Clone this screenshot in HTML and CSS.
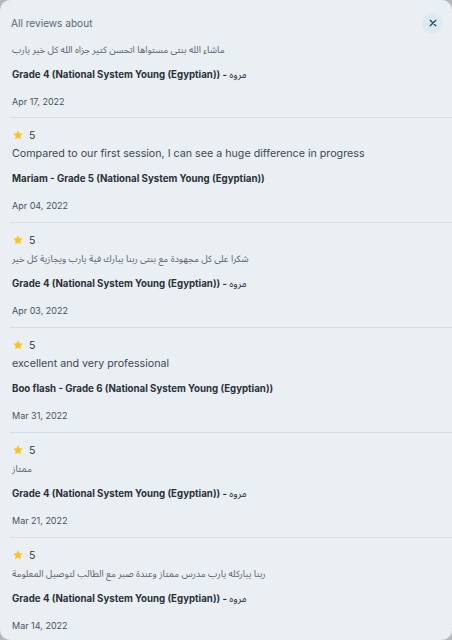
FILE: index.html
```html
<!DOCTYPE html>
<html lang="en">
<head>
<meta charset="utf-8">
<title>All reviews</title>
<link rel="stylesheet" href="styles.css">
</head>
<body>
<div class="modal">
  <div class="header">
    <span class="title">All reviews about</span>
    <button class="close" aria-label="Close">
      <svg width="8" height="8" viewBox="0 0 8 8"><path d="M1.2 1.2L6.8 6.8M6.8 1.2L1.2 6.8" stroke="#1d4a63" stroke-width="1.3" stroke-linecap="round"/></svg>
    </button>
  </div>
  <div class="list">
    <div class="item partial">
      <div class="text ar">ماشاء الله بنتى مستواها اتحسن كتير جزاه الله كل خير يارب</div>
      <div class="name">Grade 4 (National System Young (Egyptian)) - <span class="ar-name">مروه</span></div>
      <div class="date">Apr 17, 2022</div>
    </div>
    <div class="item">
      <div class="rating"><svg class="star" viewBox="0 0 24 24"><path d="M12 2.5l2.9 6.1 6.6.8-4.9 4.6 1.3 6.6L12 17.3l-5.9 3.3 1.3-6.6-4.9-4.6 6.6-.8z"/></svg><span>5</span></div>
      <div class="text">Compared to our first session, I can see a huge difference in progress</div>
      <div class="name">Mariam - Grade 5 (National System Young (Egyptian))</div>
      <div class="date">Apr 04, 2022</div>
    </div>
    <div class="item">
      <div class="rating"><svg class="star" viewBox="0 0 24 24"><path d="M12 2.5l2.9 6.1 6.6.8-4.9 4.6 1.3 6.6L12 17.3l-5.9 3.3 1.3-6.6-4.9-4.6 6.6-.8z"/></svg><span>5</span></div>
      <div class="text ar">شكرا على كل مجهودة مع بنتى ربنا يبارك فية يارب ويجازية كل خير</div>
      <div class="name">Grade 4 (National System Young (Egyptian)) - <span class="ar-name">مروه</span></div>
      <div class="date">Apr 03, 2022</div>
    </div>
    <div class="item">
      <div class="rating"><svg class="star" viewBox="0 0 24 24"><path d="M12 2.5l2.9 6.1 6.6.8-4.9 4.6 1.3 6.6L12 17.3l-5.9 3.3 1.3-6.6-4.9-4.6 6.6-.8z"/></svg><span>5</span></div>
      <div class="text">excellent and very professional</div>
      <div class="name">Boo flash - Grade 6 (National System Young (Egyptian))</div>
      <div class="date">Mar 31, 2022</div>
    </div>
    <div class="item">
      <div class="rating"><svg class="star" viewBox="0 0 24 24"><path d="M12 2.5l2.9 6.1 6.6.8-4.9 4.6 1.3 6.6L12 17.3l-5.9 3.3 1.3-6.6-4.9-4.6 6.6-.8z"/></svg><span>5</span></div>
      <div class="text ar">ممتاز</div>
      <div class="name">Grade 4 (National System Young (Egyptian)) - <span class="ar-name">مروه</span></div>
      <div class="date">Mar 21, 2022</div>
    </div>
    <div class="item">
      <div class="rating"><svg class="star" viewBox="0 0 24 24"><path d="M12 2.5l2.9 6.1 6.6.8-4.9 4.6 1.3 6.6L12 17.3l-5.9 3.3 1.3-6.6-4.9-4.6 6.6-.8z"/></svg><span>5</span></div>
      <div class="text ar">ربنا يباركله يارب مدرس ممتاز وعندة صبر مع الطالب لتوصيل المعلومة</div>
      <div class="name">Grade 4 (National System Young (Egyptian)) - <span class="ar-name">مروه</span></div>
      <div class="date">Mar 14, 2022</div>
    </div>
  </div>
</div>
</body>
</html>
```
FILE: styles.css
```css
html, body {
  margin: 0;
  padding: 0;
}
body {
  background: #b3b9bd;
  font-family: Inter, "Noto Sans", "DejaVu Sans", sans-serif;
}
.modal {
  height: 640px;
  background: #e9eff3;
  border-radius: 10px;
  overflow: hidden;
}
.header {
  display: flex;
  justify-content: space-between;
  align-items: center;
  height: 26px;
  padding: 10px 9px 0 11px;
}
.title {
  font-size: 10.1px;
  color: #5d6872;
}
.close {
  width: 21px;
  height: 21px;
  border: none;
  border-radius: 50%;
  background: #dee9f2;
  display: flex;
  align-items: center;
  justify-content: center;
  padding: 0;
}
.close svg {
  display: block;
}
.list {
  display: flex;
  flex-direction: column;
}
.item {
  margin-left: 10px;
  padding: 10px 0 8px 2px;
  border-bottom: 1px solid #d6dee3;
  height: 86px;
}
.item.partial {
  padding-top: 2px;
  height: 71px;
}
.rating {
  display: flex;
  align-items: center;
  gap: 5px;
  height: 14px;
  font-size: 10.5px;
  color: #2f3740;
}
.star {
  width: 12px;
  height: 12px;
  fill: #f7c51b;
}
.text {
  margin-top: 2px;
  height: 20px;
  line-height: 20px;
  font-size: 10.7px;
  color: #3f4852;
  white-space: nowrap;
}
.text.ar {
  font-family: "Noto Sans Arabic", "Noto Naskh Arabic", "DejaVu Sans", sans-serif;
  font-size: 9.3px;
  color: #5a636b;
}
.name {
  margin-top: 7px;
  height: 16px;
  line-height: 16px;
  font-size: 9.7px;
  font-weight: 700;
  color: #2a323b;
  white-space: nowrap;
}
.ar-name {
  font-family: "Noto Sans Arabic", "Noto Naskh Arabic", "DejaVu Sans", sans-serif;
  font-weight: 400;
  font-size: 9.8px;
}
.date {
  margin-top: 11px;
  height: 16px;
  line-height: 16px;
  font-size: 9px;
  color: #4a535c;
}
```
